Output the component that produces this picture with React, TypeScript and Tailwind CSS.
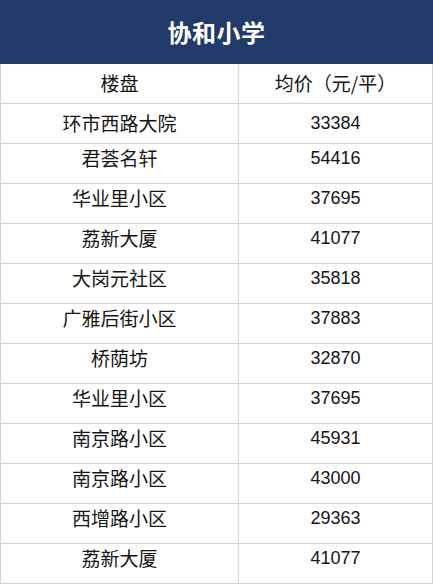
const rows: [string, string][] = [
  ["环市西路大院", "33384"],
  ["君荟名轩", "54416"],
  ["华业里小区", "37695"],
  ["荔新大厦", "41077"],
  ["大岗元社区", "35818"],
  ["广雅后街小区", "37883"],
  ["桥荫坊", "32870"],
  ["华业里小区", "37695"],
  ["南京路小区", "45931"],
  ["南京路小区", "43000"],
  ["西增路小区", "29363"],
  ["荔新大厦", "41077"],
];

export default function App() {
  return (
    <div className="w-[433px] h-[585px] bg-white font-['Noto_Sans_CJK_SC',sans-serif] text-[#151515]">
      <div className="h-[64px] bg-[#213a6a] flex items-center justify-center">
        <span className="text-white text-[24px] font-bold tracking-[0.5px]">协和小学</span>
      </div>
      <div className="border-x border-[#d4d4d4]">
        <div className="grid grid-cols-[238px_1fr] h-[40px] border-b border-[#d4d4d4] text-[19px]">
          <div className="flex items-center justify-center border-r border-[#d4d4d4]">楼盘</div>
          <div className="flex items-center justify-center">均价（元/平）</div>
        </div>
        {rows.map(([name, price], i) => {
          // text sits a little high in every row after the first
          const pad = i === 0 ? "" : " pb-[11px]";
          return (
            <div key={i} className="grid grid-cols-[238px_1fr] h-[40px] border-b border-[#d4d4d4] text-[19px]">
              <div className={"flex items-center justify-center border-r border-[#d4d4d4]" + pad}>{name}</div>
              <div className={"flex items-center justify-center font-['Liberation_Sans','Noto_Sans_CJK_SC',sans-serif] text-[18px]" + pad}>
                {price}
              </div>
            </div>
          );
        })}
      </div>
    </div>
  );
}
